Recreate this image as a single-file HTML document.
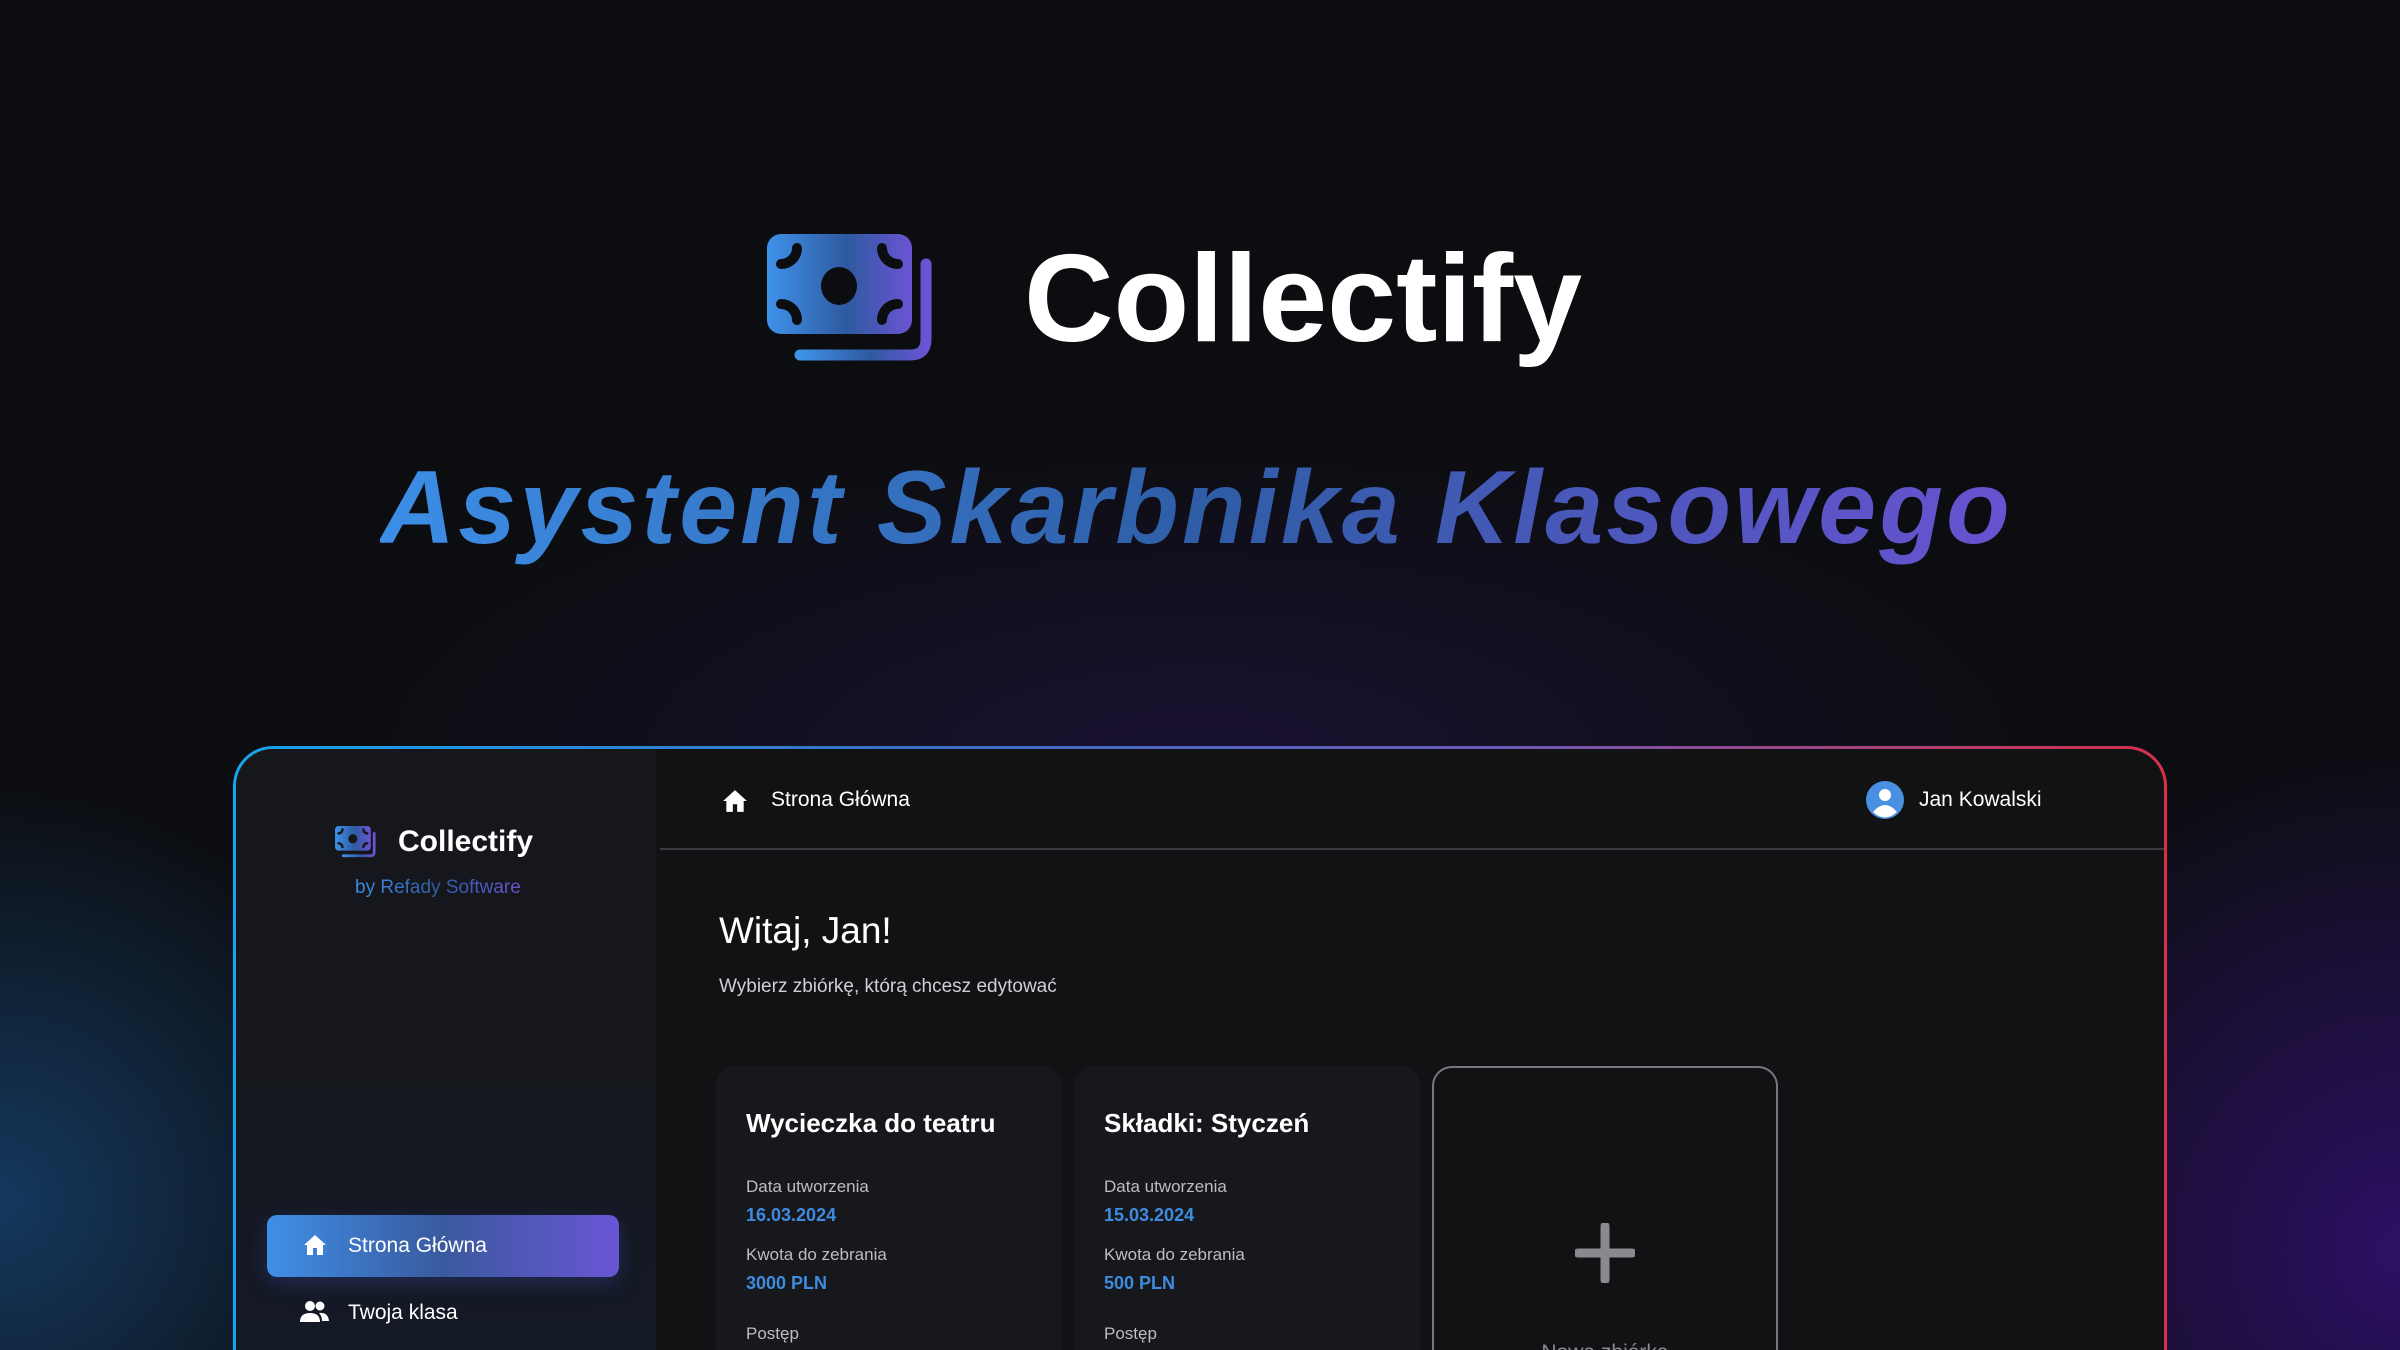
<!DOCTYPE html>
<html><head><meta charset="utf-8"><style>
*{margin:0;padding:0;box-sizing:border-box}
html,body{width:2400px;height:1350px;overflow:hidden;background:#0c0d10;font-family:"Liberation Sans","DejaVu Sans",sans-serif;color:#fff}
.wrap{position:relative;width:2400px;height:1350px;overflow:hidden}
.bg{position:absolute;inset:0;background:
radial-gradient(ellipse 420px 420px at 0px 1200px,rgba(30,110,190,.45),transparent 100%),
radial-gradient(ellipse 500px 520px at 2400px 1250px,rgba(70,20,170,.55),transparent 100%),
radial-gradient(ellipse 900px 330px at 1200px 760px,rgba(50,25,110,.35),transparent 100%);}
.abs{position:absolute;white-space:nowrap}
.frame{position:absolute;left:233px;top:746px;width:1934px;height:660px;border-radius:40px;
background:linear-gradient(90deg,#18a4ee 0%,#3a70c8 35%,#6a5ab8 65%,#d8304c 100%)}
.inner{position:absolute;inset:3px;border-radius:37px;background:#111214;overflow:hidden}
.side{position:absolute;left:0;top:0;width:420px;height:100%;background:linear-gradient(180deg,#16171b 0%,#15171d 50%,#131a28 100%)}
.grad{background:linear-gradient(90deg,#3c8ee6,#2f5da6 50%,#6a52d2);-webkit-background-clip:text;background-clip:text;color:transparent}
.card{position:absolute;top:320px;width:346px;height:500px;border-radius:20px;background:#17181c}
.card .t{position:absolute;left:30px;top:42px;font-size:26px;font-weight:bold}
.card .l{position:absolute;left:30px;font-size:17px;color:#bdbdc2}
.card .v{position:absolute;left:30px;font-size:18px;color:#3f8be0;font-weight:bold}
</style></head><body><div class="wrap">
<div class="bg"></div>

<svg class="abs" style="left:767px;top:234px" width="170" height="130" viewBox="0 0 170 130">
<defs><linearGradient id="g1" x1="0" x2="1"><stop offset="0" stop-color="#3f92ea"/><stop offset=".55" stop-color="#2e5aa0"/><stop offset="1" stop-color="#6a54d4"/></linearGradient></defs>
<rect x="0" y="0" width="145" height="100" rx="14" fill="url(#g1)"/>
<path d="M159 30 V105 Q159 121 143 121 H33" fill="none" stroke="url(#g1)" stroke-width="11" stroke-linecap="round"/>
<ellipse cx="72" cy="52" rx="18" ry="19" fill="#0c0d10"/>
<g fill="none" stroke="#0c0d10" stroke-width="10" stroke-linecap="round">
<path d="M30 14 A16 16 0 0 1 14 30"/><path d="M115 14 A16 16 0 0 0 131 30"/>
<path d="M30 86 A16 16 0 0 0 14 70"/><path d="M115 86 A16 16 0 0 1 131 70"/>
</g></svg>
<div class="abs" style="left:1024px;top:224px;font-size:124px;font-weight:bold;line-height:150px">Collectify</div>
<div class="abs grad" style="left:380px;top:448px;font-size:104px;font-weight:bold;font-style:italic;letter-spacing:3.2px;line-height:120px;padding-right:20px">Asystent Skarbnika Klasowego</div>

<div class="frame"><div class="inner">
<div class="side">
<svg class="abs" style="left:98px;top:77px" width="44" height="32" viewBox="0 0 170 130">
<rect x="0" y="0" width="145" height="100" rx="14" fill="url(#g1)"/>
<path d="M159 30 V105 Q159 121 143 121 H33" fill="none" stroke="url(#g1)" stroke-width="11" stroke-linecap="round"/>
<ellipse cx="72" cy="52" rx="18" ry="19" fill="#16171b"/>
<g fill="none" stroke="#16171b" stroke-width="10" stroke-linecap="round">
<path d="M30 14 A16 16 0 0 1 14 30"/><path d="M115 14 A16 16 0 0 0 131 30"/>
<path d="M30 86 A16 16 0 0 0 14 70"/><path d="M115 86 A16 16 0 0 1 131 70"/></g></svg>
<div class="abs" style="left:162px;top:75px;font-size:30px;font-weight:bold;line-height:36px">Collectify</div>
<div class="abs grad" style="left:119px;top:127px;font-size:19px;line-height:24px">by Refady Software</div>
<div class="abs" style="left:31px;top:466px;width:352px;height:62px;border-radius:10px;background:linear-gradient(90deg,#3f8fe6,#3a5a9e 50%,#6a55d4);box-shadow:0 6px 20px rgba(70,90,200,.3)"></div>
<svg class="abs" style="left:67px;top:485px" width="24" height="22" viewBox="0 0 24 22"><path d="M12 1 L1 11 H4 V21 H10 V14 H14 V21 H20 V11 H23 Z" fill="#fff"/></svg>
<div class="abs" style="left:112px;top:484px;font-size:21px;line-height:26px">Strona Główna</div>
<svg class="abs" style="left:64px;top:551px" width="30" height="24" viewBox="0 0 30 24"><circle cx="10" cy="6" r="5" fill="#fff"/><circle cx="20" cy="6" r="4.5" fill="#fff"/><path d="M0 22 Q0 13 10 13 Q20 13 20 22 Z" fill="#fff"/><path d="M19 13 Q28 12 29 21 H22 Q22 16 19 13Z" fill="#fff"/></svg>
<div class="abs" style="left:112px;top:551px;font-size:21px;line-height:26px">Twoja klasa</div>
</div>
<svg class="abs" style="left:486px;top:40px" width="26" height="24" viewBox="0 0 24 22"><path d="M12 1 L1 11 H4 V21 H10 V14 H14 V21 H20 V11 H23 Z" fill="#fff"/></svg>
<div class="abs" style="left:535px;top:38px;font-size:21px;line-height:26px">Strona Główna</div>
<svg class="abs" style="left:1630px;top:32px" width="38" height="38" viewBox="0 0 38 38"><circle cx="19" cy="19" r="19" fill="#4a90e2"/><circle cx="19" cy="14" r="6" fill="#fff"/><path d="M7 31 Q19 17 31 31 Q19 42 7 31Z" fill="#fff"/></svg>
<div class="abs" style="left:1683px;top:38px;font-size:21px;line-height:26px">Jan Kowalski</div>
<div class="abs" style="left:424px;top:99px;width:1510px;height:2px;background:#3a3b3f"></div>
<div class="abs" style="left:483px;top:160px;font-size:37px;line-height:44px">Witaj, Jan!</div>
<div class="abs" style="left:483px;top:226px;font-size:19px;line-height:24px;color:#d0d0d4">Wybierz zbiórkę, którą chcesz edytować</div>
<div class="card" style="left:480px;top:317px"><div class="t">Wycieczka do teatru</div>
<div class="l" style="top:111px">Data utworzenia</div><div class="v" style="top:139px">16.03.2024</div>
<div class="l" style="top:179px">Kwota do zebrania</div><div class="v" style="top:207px">3000 PLN</div>
<div class="l" style="top:258px">Postęp</div></div>
<div class="card" style="left:838px;top:317px"><div class="t">Składki: Styczeń</div>
<div class="l" style="top:111px">Data utworzenia</div><div class="v" style="top:139px">15.03.2024</div>
<div class="l" style="top:179px">Kwota do zebrania</div><div class="v" style="top:207px">500 PLN</div>
<div class="l" style="top:258px">Postęp</div></div>
<div class="card" style="left:1196px;top:317px;background:#111214;border:2px solid #77787c"></div>
<svg class="abs" style="left:1339px;top:474px" width="60" height="60" viewBox="0 0 60 60"><path d="M30 3 V57 M3 30 H57" stroke="#8a8a8e" stroke-width="9" stroke-linecap="round"/></svg>
<div class="abs" style="left:1196px;width:346px;text-align:center;top:592px;font-size:21px;color:#8a8a8e">Nowa zbiórka</div>
</div></div>
</div></body></html>
